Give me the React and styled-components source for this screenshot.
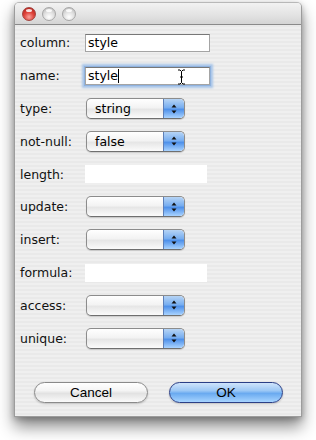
import React from "react";
import styled, { createGlobalStyle } from "styled-components";

const Global = createGlobalStyle`
  html, body { margin: 0; padding: 0; background: #fff; }
  body { font-family: "DejaVu Sans", "Liberation Sans", sans-serif; }
`;

const Stage = styled.div`
  width: 316px;
  height: 440px;
  padding: 2px 0 0 14px;
  box-sizing: border-box;
`;

const Window = styled.div`
  width: 288px;
  height: 415px;
  display: flex;
  flex-direction: column;
  border-radius: 5px 5px 0 0;
  border: 1px solid #9c9c9c;
  border-top-color: #b8b8b8;
  box-sizing: border-box;
  background: repeating-linear-gradient(#efefef 0 2px, #e9e9e9 2px 4px);
  box-shadow: 0 10px 16px rgba(0, 0, 0, 0.45), 0 2px 6px rgba(0, 0, 0, 0.25);
  overflow: hidden;
`;

const TitleBar = styled.div`
  height: 21px;
  flex: none;
  display: flex;
  align-items: center;
  gap: 6px;
  padding-left: 7px;
  background: linear-gradient(#f2f2f2, #e2e2e2 60%, #d4d4d4);
  border-bottom: 1px solid #8a8a8a;
`;

const Light = styled.span`
  width: 14px;
  height: 14px;
  border-radius: 50%;
  box-sizing: border-box;
  border: 1px solid ${(p) => (p.$red ? "#a3413c" : "#a6a6a6")};
  background: ${(p) =>
    p.$red
      ? "radial-gradient(circle at 50% 75%, #f7a29b 0, #e0453c 45%, #b3231c 90%)"
      : "radial-gradient(circle at 50% 75%, #ffffff 0, #e2e2e2 45%, #bdbdbd 90%)"};
  position: relative;
  &::after {
    content: "";
    position: absolute;
    left: 3px;
    top: 1px;
    width: 6px;
    height: 3px;
    border-radius: 50%;
    background: rgba(255, 255, 255, 0.85);
  }
`;

const Form = styled.div`
  display: grid;
  grid-template-columns: 65px 1fr;
  grid-auto-rows: 32.8px;
  align-items: center;
  padding: 1.6px 0 0 5px;
`;

const Label = styled.div`
  font-size: 12.5px;
  color: #111;
`;

const FieldWrap = styled.div`
  position: relative;
  width: ${(p) => p.$w}px;
  height: 18px;
  box-sizing: border-box;
  background: #fff;
  border: 1px solid ${(p) => (p.$plain ? "#fff" : "#a4a4a4")};
  border-top-color: ${(p) => (p.$plain ? "#fff" : "#777")};
  box-shadow: ${(p) =>
    p.$focus ? "0 0 0 1px #8fb2de, 0 0 2px 3px #a9c6ea" : "none"};
  display: flex;
  align-items: center;
  padding-left: 2px;
  font-size: 12.5px;
  color: #000;
`;

const Caret = styled.span`
  display: inline-block;
  width: 1px;
  height: 14px;
  background: #000;
`;

const IBeam = styled.svg`
  position: absolute;
  left: 91px;
  top: 1px;
`;

const Popup = styled.div`
  width: 99px;
  height: 21px;
  box-sizing: border-box;
  border-radius: 5px;
  border: 1px solid #8c8c8c;
  border-bottom-color: #6f6f6f;
  display: flex;
  overflow: hidden;
  background: linear-gradient(#ffffff, #f3f3f3 45%, #e6e6e6 55%, #fbfbfb);
  box-shadow: 0 1px 1px rgba(0, 0, 0, 0.15);
  margin-left: 1px;
`;

const PopupText = styled.div`
  flex: 1;
  font-size: 12.5px;
  line-height: 19px;
  padding-left: 8px;
  color: #000;
`;

const Stepper = styled.div`
  width: 20px;
  flex: none;
  border-left: 1px solid #5d7fb8;
  border-radius: 0 4px 4px 0;
  background: linear-gradient(#b6d4f5, #78aef0 45%, #4f91ea 55%, #a9d3ff);
  display: flex;
  align-items: center;
  justify-content: center;
`;

const Buttons = styled.div`
  display: flex;
  gap: 21px;
  padding: 27px 0 0 19px;
`;

const Button = styled.button`
  width: ${(p) => p.$w}px;
  height: 21px;
  border-radius: 11px;
  box-sizing: border-box;
  font-family: "Liberation Sans", Arial, sans-serif;
  font-size: 13.5px;
  color: #000;
  padding: 0;
  border: 1px solid ${(p) => (p.$primary ? "#2b3f86" : "#8a8a8a")};
  background: ${(p) =>
    p.$primary
      ? "linear-gradient(#cfe4fb, #9dc8f5 40%, #6aaaf0 55%, #a7d4ff)"
      : "linear-gradient(#ffffff, #f4f4f4 40%, #e2e2e2 55%, #fafafa)"};
  box-shadow: 0 1px 2px rgba(0, 0, 0, 0.2);
`;

const Arrows = () => (
  <svg width="8" height="12" viewBox="0 0 8 12">
    <path d="M4 1.5 L6.5 4.5 L1.5 4.5 Z" fill="#111" />
    <path d="M1.5 7.5 L6.5 7.5 L4 10.5 Z" fill="#111" />
  </svg>
);

const Select = ({ value }) => (
  <Popup>
    <PopupText>{value}</PopupText>
    <Stepper>
      <Arrows />
    </Stepper>
  </Popup>
);

const rows = [
  { label: "column:", kind: "field", value: "style" },
  { label: "name:", kind: "field", value: "style", focus: true },
  { label: "type:", kind: "select", value: "string" },
  { label: "not-null:", kind: "select", value: "false" },
  { label: "length:", kind: "plain" },
  { label: "update:", kind: "select", value: "" },
  { label: "insert:", kind: "select", value: "" },
  { label: "formula:", kind: "plain" },
  { label: "access:", kind: "select", value: "" },
  { label: "unique:", kind: "select", value: "" },
];

export default function App() {
  return (
    <Stage>
      <Global />
      <Window>
        <TitleBar>
          <Light $red />
          <Light />
          <Light />
        </TitleBar>
        <Form>
          {rows.map((r) => (
            <React.Fragment key={r.label}>
              <Label>{r.label}</Label>
              <div>
                {r.kind === "field" && (
                  <FieldWrap $w={125} $focus={r.focus}>
                    {r.value}
                    {r.focus && <Caret />}
                    {r.focus && (
                      <IBeam width="9" height="16" viewBox="0 0 9 16">
                        <path
                          d="M1 1 H3 L4.5 2.5 L6 1 H8 M4.5 2.5 V13.5 M1 15 H3 L4.5 13.5 L6 15 H8 M3 8 H6"
                          stroke="#000"
                          strokeWidth="1"
                          fill="none"
                        />
                      </IBeam>
                    )}
                  </FieldWrap>
                )}
                {r.kind === "plain" && <FieldWrap $w={122} $plain />}
                {r.kind === "select" && <Select value={r.value} />}
              </div>
            </React.Fragment>
          ))}
        </Form>
        <Buttons>
          <Button $w={114}>Cancel</Button>
          <Button $w={114} $primary>
            OK
          </Button>
        </Buttons>
      </Window>
    </Stage>
  );
}
